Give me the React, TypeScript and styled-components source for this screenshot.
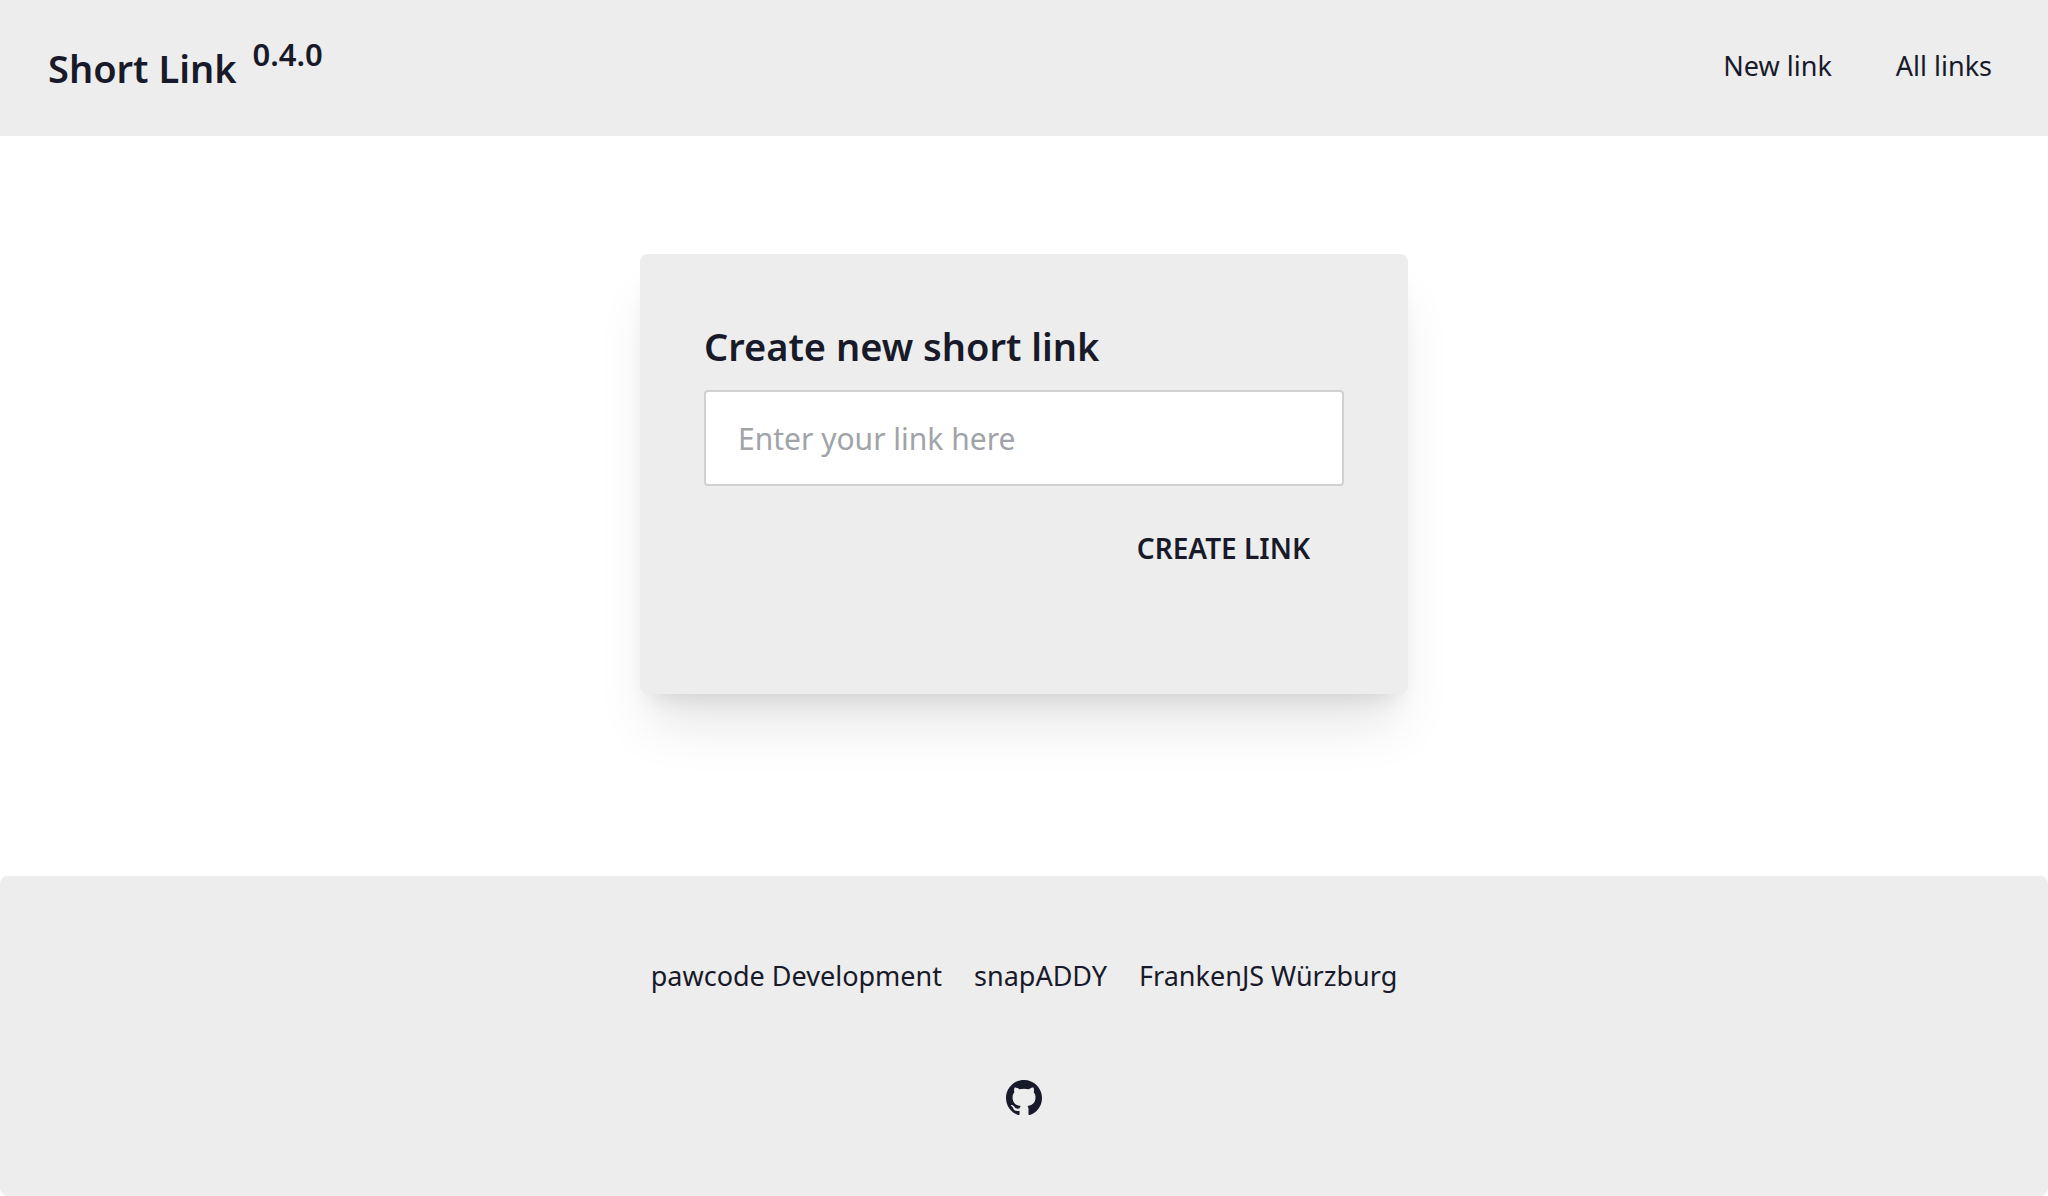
import React from "react";
import styled, { createGlobalStyle } from "styled-components";

const ink = "#181a2a";
const surface = "#ededed";

const GlobalStyle = createGlobalStyle`
  *, *::before, *::after { box-sizing: border-box; }
  body {
    margin: 0;
    background: #ffffff;
    color: ${ink};
    font-family: "Noto Sans", sans-serif;
    font-size: 27px;
    line-height: 40px;
  }
`;

const Page = styled.div`
  display: flex;
  flex-direction: column;
  min-height: 100vh;
`;

const Header = styled.header`
  display: flex;
  align-items: center;
  justify-content: space-between;
  padding: 18px 24px 18px 48px;
  background: ${surface};
`;

const Brand = styled.a`
  display: flex;
  align-items: flex-start;
  gap: 16px;
  padding: 22px 0;
  color: inherit;
  text-decoration: none;
  font-size: 38px;
  line-height: 56px;
  font-weight: 600;
`;

const Version = styled.span`
  font-size: 31px;
  line-height: 28px;
`;

const Nav = styled.nav`
  display: flex;
`;

const NavLink = styled.a`
  padding: 26px 32px 30px;
  color: inherit;
  text-decoration: none;
`;

const Main = styled.main`
  display: flex;
  flex: 1;
  justify-content: center;
  align-items: flex-start;
  padding: 118px 32px 64px;
`;

const Card = styled.form`
  display: flex;
  flex-direction: column;
  width: 100%;
  max-width: 768px;
  padding: 64px 64px 98px;
  border-radius: 8px;
  background: ${surface};
  box-shadow: 0 40px 50px -10px rgba(0, 0, 0, 0.1),
    0 16px 20px -12px rgba(0, 0, 0, 0.1);
`;

const Title = styled.label`
  margin-bottom: 16px;
  font-size: 38px;
  line-height: 56px;
  font-weight: 600;
`;

const LinkInput = styled.input`
  height: 96px;
  padding: 0 32px;
  border: 2px solid #d0d1d2;
  border-radius: 4px;
  background: #ffffff;
  color: inherit;
  font-family: inherit;
  font-size: 30px;
  outline: none;

  &::placeholder {
    color: #a0a3a8;
    opacity: 1;
  }
`;

const SubmitButton = styled.button`
  align-self: flex-end;
  height: 96px;
  margin-top: 14px;
  padding: 0 34px;
  border: 0;
  border-radius: 4px;
  background: transparent;
  color: inherit;
  font-family: inherit;
  font-size: 28px;
  font-weight: 600;
  text-transform: uppercase;
  cursor: pointer;
`;

const Footer = styled.footer`
  display: flex;
  flex-direction: column;
  align-items: center;
  gap: 84px;
  padding: 80px;
  border-radius: 8px;
  background: ${surface};
`;

const FooterLinks = styled.nav`
  display: flex;
  flex-wrap: wrap;
  justify-content: center;
  gap: 32px;
`;

const FooterLink = styled.a`
  color: inherit;
  text-decoration: none;
`;

const IconLink = styled.a`
  display: flex;
  color: inherit;
`;

const GithubIcon = () => (
  <svg width="36" height="36" viewBox="0 0 16 16" fill="currentColor" aria-hidden="true">
    <path d="M8 0C3.58 0 0 3.58 0 8c0 3.54 2.29 6.53 5.47 7.59.4.07.55-.17.55-.38 0-.19-.01-.82-.01-1.49-2.01.37-2.53-.49-2.69-.94-.09-.23-.48-.94-.82-1.13-.28-.15-.68-.52-.01-.53.63-.01 1.08.58 1.23.82.72 1.21 1.87.87 2.33.66.07-.52.28-.87.51-1.07-1.78-.2-3.64-.89-3.64-3.95 0-.87.31-1.59.82-2.15-.08-.2-.36-1.02.08-2.12 0 0 .67-.21 2.2.82.64-.18 1.32-.27 2-.27s1.36.09 2 .27c1.53-1.04 2.2-.82 2.2-.82.44 1.1.16 1.92.08 2.12.51.56.82 1.27.82 2.15 0 3.07-1.87 3.75-3.65 3.95.29.25.54.73.54 1.48 0 1.07-.01 1.93-.01 2.2 0 .21.15.46.55.38A8.01 8.01 0 0 0 16 8c0-4.42-3.58-8-8-8z" />
  </svg>
);

const partners = ["pawcode Development", "snapADDY", "FrankenJS Würzburg"];

export default function App() {
  return (
    <Page>
      <GlobalStyle />
      <Header>
        <Brand href="#">
          <span>Short Link</span>
          <Version>0.4.0</Version>
        </Brand>
        <Nav>
          <NavLink href="#new">New link</NavLink>
          <NavLink href="#all">All links</NavLink>
        </Nav>
      </Header>
      <Main>
        <Card onSubmit={(event) => event.preventDefault()}>
          <Title htmlFor="link">Create new short link</Title>
          <LinkInput id="link" type="text" placeholder="Enter your link here" />
          <SubmitButton type="submit">Create link</SubmitButton>
        </Card>
      </Main>
      <Footer>
        <FooterLinks>
          {partners.map((name) => (
            <FooterLink key={name} href="#">
              {name}
            </FooterLink>
          ))}
        </FooterLinks>
        <IconLink href="#" aria-label="GitHub">
          <GithubIcon />
        </IconLink>
      </Footer>
    </Page>
  );
}
